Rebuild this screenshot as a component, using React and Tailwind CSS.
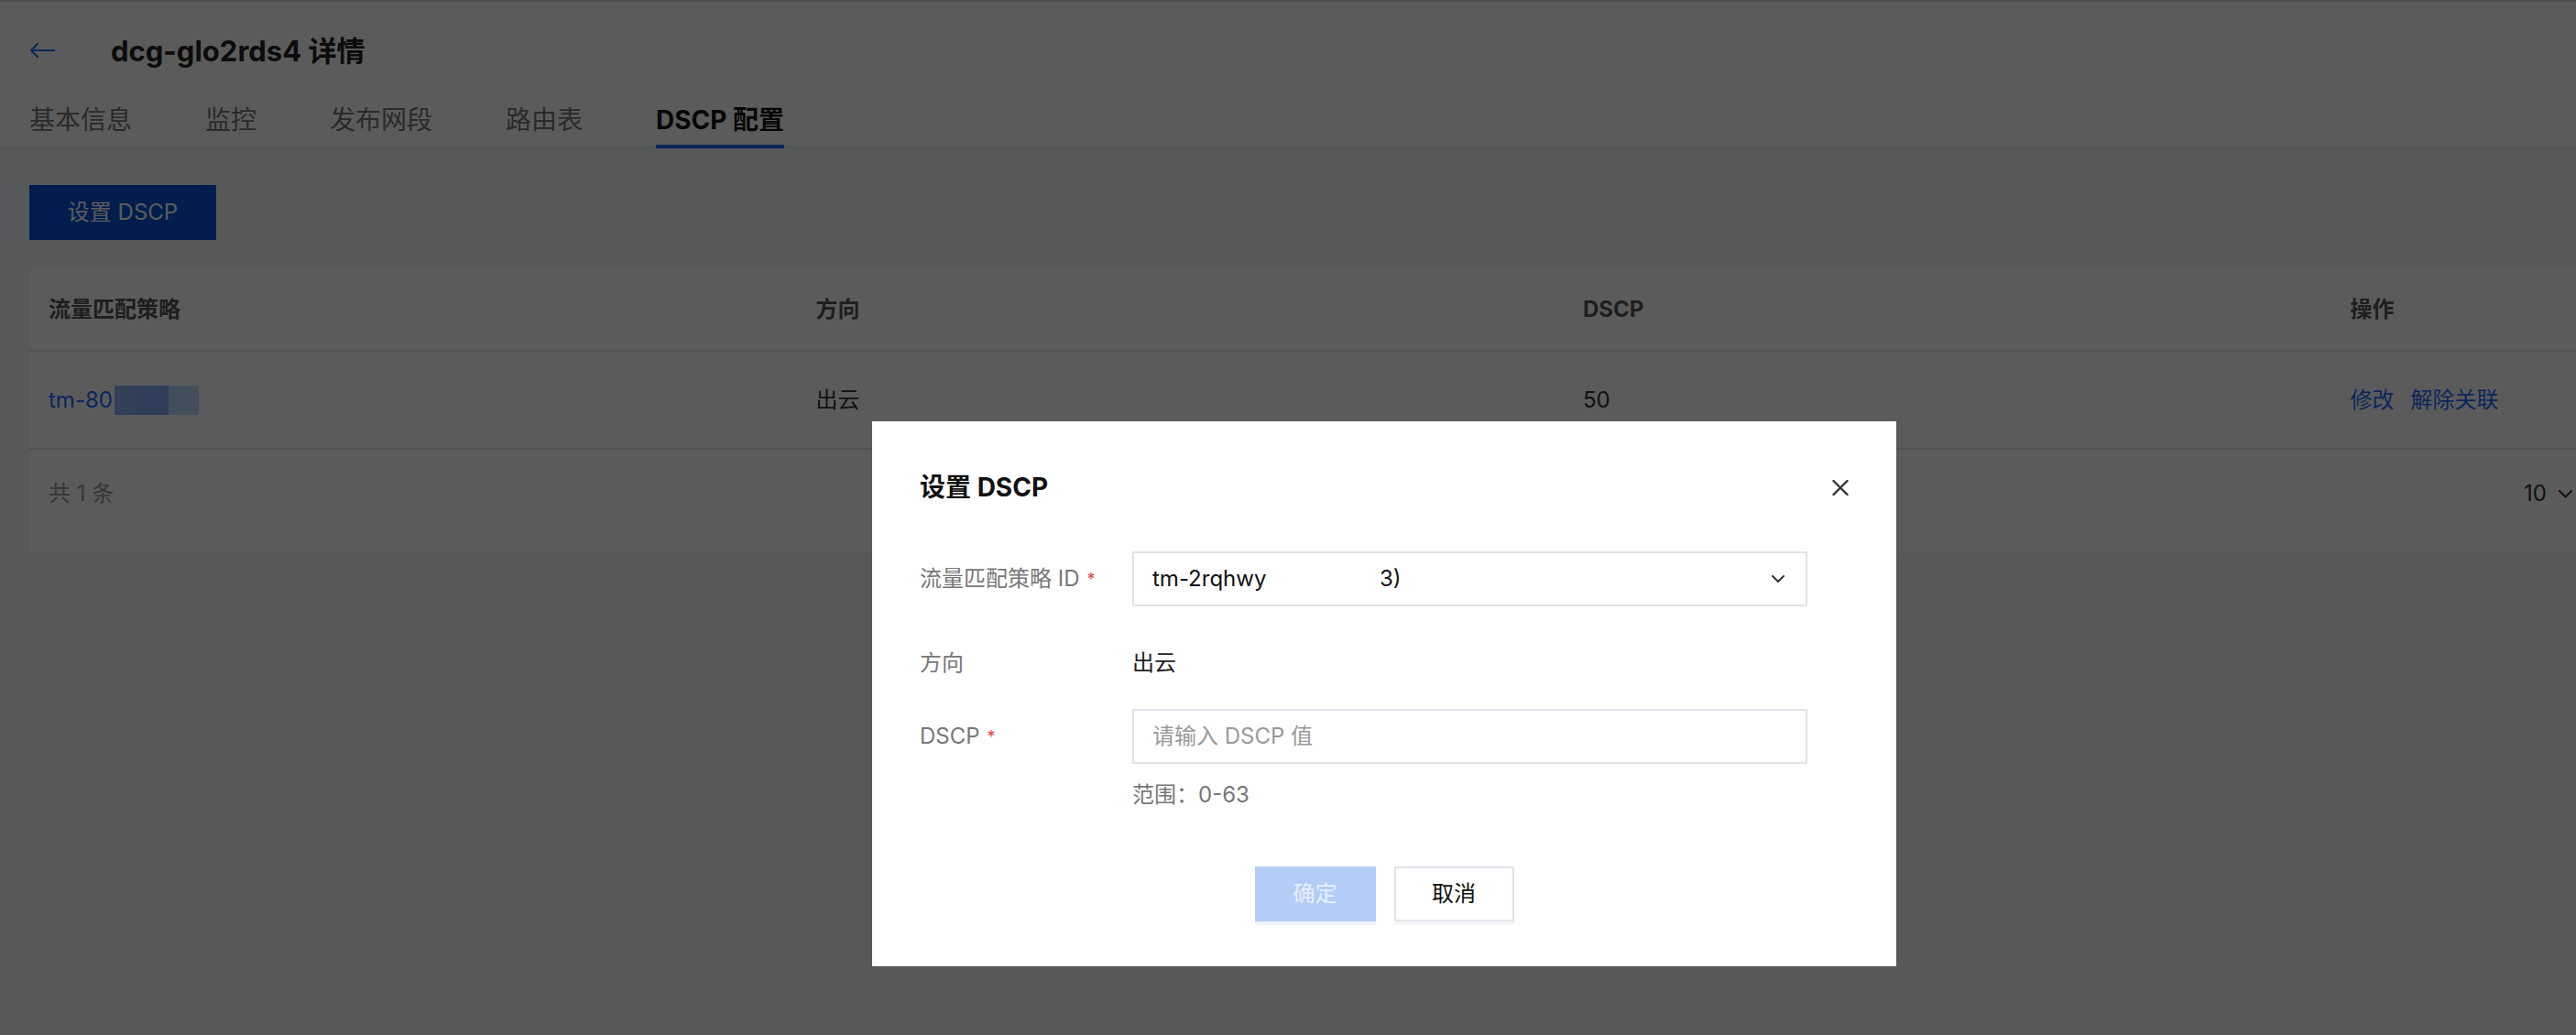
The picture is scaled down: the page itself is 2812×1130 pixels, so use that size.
import React from 'react';

const tabs = ['基本信息', '监控', '发布网段', '路由表', 'DSCP 配置'];

const App = () => {
  return (
    <div className="relative w-[2812px] h-[1130px] overflow-hidden bg-[#f3f6fd] font-['Inter','Noto_Sans_CJK_SC',sans-serif]">
      {/* Page header */}
      <div className="bg-white border-t-2 border-[#dddddd]">
        <div className="h-[106px] flex items-center pl-[32px]">
          <svg width="28" height="16" viewBox="0 0 28 16" fill="none" stroke="#1c6cff" strokeWidth="2" strokeLinecap="round" strokeLinejoin="round">
            <path d="M27 8H2M9 1L2 8l7 7" />
          </svg>
          <h1 className="ml-[61px] text-[31px] leading-[31px] font-bold text-[#222]">dcg-glo2rds4 详情</h1>
        </div>
        <div className="h-[54px] flex gap-[80px] pl-[32px] border-b-2 border-[#e4e7ef]">
          {tabs.map((t, i) => (
            <div
              key={t}
              className={
                i === tabs.length - 1
                  ? 'h-[54px] pt-[9px] text-[28px] leading-[28px] font-bold text-[#111] border-b-4 border-[#1c6cff]'
                  : 'h-[54px] pt-[9px] text-[28px] leading-[28px] text-[#777]'
              }
            >
              {t}
            </div>
          ))}
        </div>
      </div>

      {/* Content */}
      <div className="px-[32px] pt-[40px]">
        <button className="w-[204px] h-[60px] bg-[#0052d9] text-white text-[24px]">设置 DSCP</button>

        <div className="mt-[32px] w-[3350px] bg-white text-[24px]">
          <div className="grid grid-cols-4 h-[90px] border-b-2 border-[#e4e7ef] font-bold text-[#555]">
            <div className="pl-[21px] flex items-center">流量匹配策略</div>
            <div className="pl-[21px] flex items-center">方向</div>
            <div className="pl-[21px] flex items-center">DSCP</div>
            <div className="pl-[21px] flex items-center">操作</div>
          </div>
          <div className="grid grid-cols-4 h-[107px] border-b-2 border-[#e4e7ef] text-[#333]">
            <div className="pl-[21px] flex items-center">
              <span className="text-[#1c6cff]">tm-80</span>
              <span className="flex h-[32px] ml-[2px]">
                <span className="w-[23px] bg-[#93b4f4]"></span>
                <span className="w-[36px] bg-[#88aff9]"></span>
                <span className="w-[33px] bg-[#badeff]"></span>
              </span>
            </div>
            <div className="pl-[21px] flex items-center">出云</div>
            <div className="pl-[21px] flex items-center">50</div>
            <div className="pl-[21px] flex items-center gap-[18px] text-[#1c6cff]">
              <span>修改</span>
              <span>解除关联</span>
            </div>
          </div>
          <div className="h-[112px] pb-[16px] flex items-center pl-[21px]">
            <div className="w-[2702px] text-[#999]">共 1 条</div>
            <div className="flex items-center gap-[13px] text-[#333]">
              <span>10</span>
              <svg width="15" height="9" viewBox="0 0 15 9" fill="none" stroke="#333" strokeWidth="2" strokeLinecap="round" strokeLinejoin="round">
                <path d="M1 1l6.5 6.5L14 1" />
              </svg>
            </div>
          </div>
        </div>
      </div>

      {/* Mask */}
      <div className="absolute inset-0 bg-black/[0.643]"></div>

      {/* Dialog */}
      <div className="absolute left-[952px] top-[460px] w-[1118px] bg-white px-[52px] pb-[49px]">
        <div className="mt-[52px] h-[40px] flex items-center justify-between">
          <h2 className="text-[28px] leading-[28px] font-bold text-[#111]">设置 DSCP</h2>
          <svg width="18" height="17" viewBox="0 0 18 17" fill="none" stroke="#333" strokeWidth="2.4" strokeLinecap="round">
            <path d="M1.5 1l15 15M16.5 1l-15 15" />
          </svg>
        </div>

        <div className="mt-[50px] flex items-center text-[24px]">
          <div className="w-[232px] flex items-center text-[#777]">
            流量匹配策略 ID<span className="ml-[8px] text-[#e54545] text-[18px]">*</span>
          </div>
          <div className="w-[737px] h-[60px] border-2 border-[#dfe3ea] pl-[20px] pr-[23px] flex items-center justify-between text-[#111]">
            <div className="flex">
              <span className="w-[248px]">tm-2rqhwy</span>
              <span>3)</span>
            </div>
            <svg width="14" height="8" viewBox="0 0 14 8" fill="none" stroke="#333" strokeWidth="2" strokeLinecap="round" strokeLinejoin="round">
              <path d="M1 1l6 6 6-6" />
            </svg>
          </div>
        </div>

        <div className="mt-[40px] h-[44px] flex items-center text-[24px]">
          <div className="w-[232px] text-[#777]">方向</div>
          <div className="text-[#222]">出云</div>
        </div>

        <div className="mt-[28px] flex items-center text-[24px]">
          <div className="w-[232px] flex items-center text-[#777]">
            DSCP<span className="ml-[8px] text-[#e54545] text-[18px]">*</span>
          </div>
          <div className="w-[737px] h-[60px] border-2 border-[#dfe3ea] pl-[20px] flex items-center text-[#999]">
            请输入 DSCP 值
          </div>
        </div>

        <div className="mt-[20px] pl-[232px] text-[24px] leading-[28px] text-[#777]">范围：0-63</div>

        <div className="mt-[64px] flex justify-center gap-[20px] text-[24px]">
          <button className="w-[132px] h-[60px] bg-[#b3cdf7] text-[#e8efff] shadow-[0_4px_0_#eef3fc]">确定</button>
          <button className="w-[131px] h-[60px] bg-white border-2 border-[#dfe3ea] text-[#111] shadow-[0_4px_0_#f5f6f8]">取消</button>
        </div>
      </div>
    </div>
  );
};

export default App;
